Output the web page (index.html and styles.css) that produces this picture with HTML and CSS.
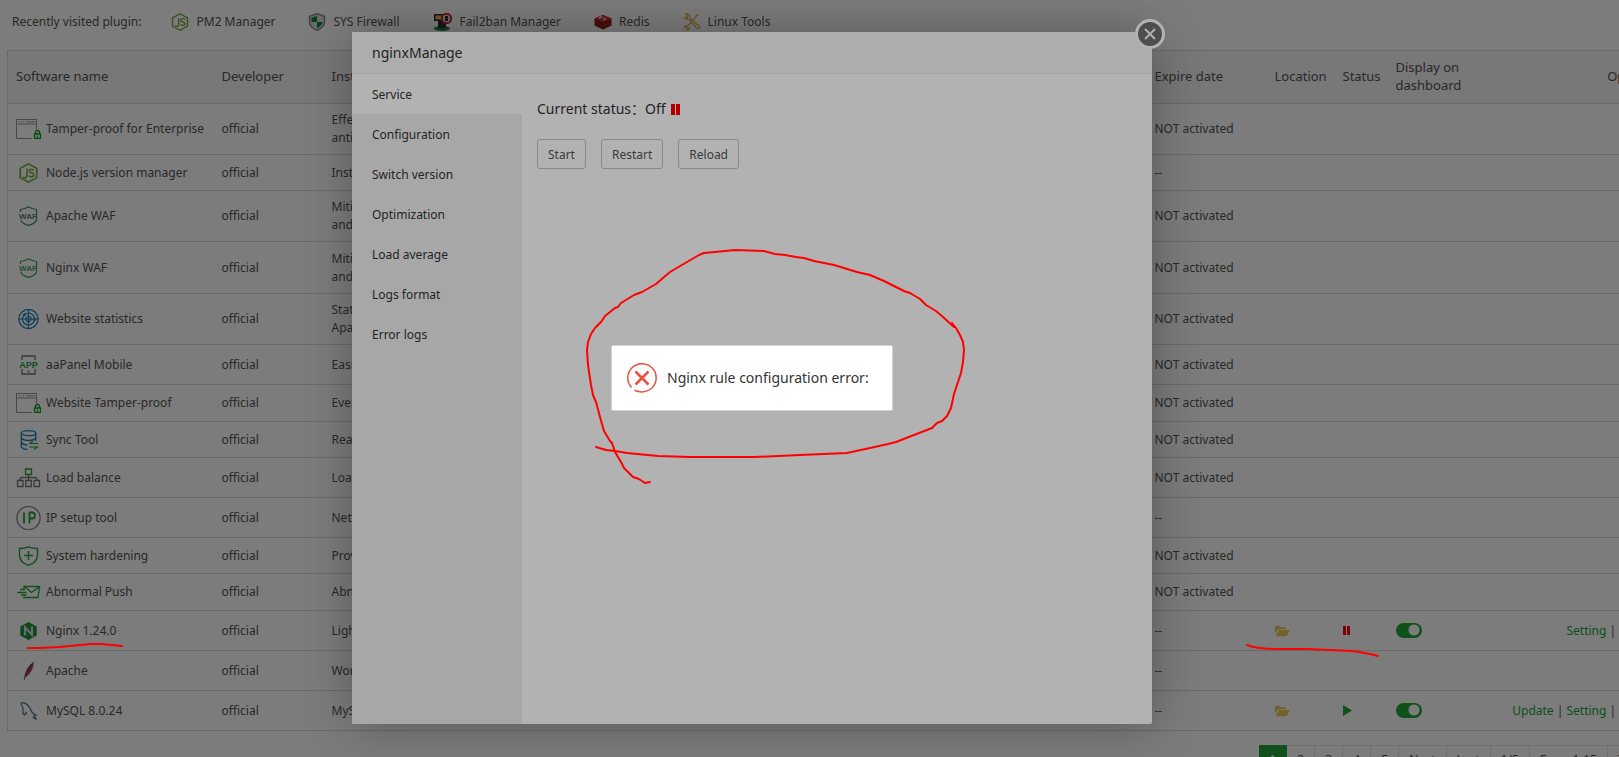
FILE: index.html
```
<!DOCTYPE html>
<html lang="en">
<head>
    <meta charset="UTF-8">
    <meta name="viewport" content="width=device-width, initial-scale=1.0">
    <title>aaPanel - App Store</title>
    <link rel="stylesheet" href="styles.css">
</head>
<body>
    <svg class="sprite" aria-hidden="true">
        <symbol id="i-node" viewBox="0 0 20 20">
            <g fill="none" stroke="#6da832" stroke-width="1.5">
                <path d="M10 .8l8.300 4.600v9.200L10 19.200l-8.300-4.600V5.400z"/>
                <path d="M8.500 5.500v7.500q0 1.700-1.700 1.700t-2-1M15.300 7.500q-.6-1.200-2.400-1.200t-2 1.600 2 1.900 2.400 2-2.200 1.900-2.500-1.200"/>
            </g>
        </symbol>
        <symbol id="i-tamper" viewBox="0 0 25 20">
            <path d="M15.500 19.500H.5V.5h20v10M.5 5h20M3 2.800h1M5 2.800h1M7 2.800h1M10 2.800h9" fill="none" stroke="#9696a0"/>
            <path d="M19.500 15v-1.500a2 2 0 0 1 4 0V15M18.500 15h6v4.500h-6zM21.500 16.500v2" fill="none" stroke="#0ca01c" stroke-width="1.300"/>
        </symbol>
        <symbol id="i-shield" viewBox="0 0 25 20">
            <path d="M4.500 6V3.500Q9 3 12.500.8 16 3 20.500 3.500V14q-1.500 3.800-8 5.300Q6.300 17.800 4.800 14" fill="none" stroke="currentColor" stroke-width="1.200"/>
        </symbol>
        <symbol id="i-folder" viewBox="0 0 16 12">
            <path d="M0 9V2q0-1.500 1.500-1.500h3Q6 .5 6 2h4.500Q12 2 12 3.500V4H4.500Q3 4 2.300 5.200zM.5 11.500l3-5.700Q4 5 5 5h10.500L13 10.500q-.5 1-1.500 1z" fill="#ecc95a"/>
        </symbol>
    </svg>

    <div class="page">
        <div class="recent">
            <span>Recently visited plugin:</span>
            <a href="#"><svg width="18" height="18"><use href="#i-node"/></svg>PM2 Manager</a>
            <a href="#"><svg width="18" height="18" viewBox="0 0 18 18"><path d="M9 .8l7.500 2.500v6Q16 14.500 9 17.300 2 14.500 1.500 9.300v-6z" fill="#ddd" stroke="#888" stroke-width="1.500"/><path d="M9 3v6H3.500V4.700zM9 9h5.500q-.5 4-5.500 6.300z" fill="#0b8a30"/></svg>SYS Firewall</a>
            <a href="#"><svg width="20" height="18" viewBox="0 0 20 18"><ellipse cx="9" cy="15.500" rx="8" ry="2.500" fill="#1d8438"/><path d="M1 1h9v7H1zM5 8h8v7H5z" fill="#333"/><path d="M2.500 2.500h6v4h-6z" fill="#d9c64e"/><circle cx="13.500" cy="5.500" r="4.700" fill="#ddd" stroke="#c8282d" stroke-width="2"/><path d="M12 3h3v5h-3z" fill="#333"/></svg>Fail2ban Manager</a>
            <a href="#"><svg width="18" height="16" viewBox="0 0 18 16"><path d="M9 1l8.500 3.500v7L9 15.500.5 11.500v-7z" fill="#8a1a1a"/><path d="M9 1l8.500 3.500L9 8.200.5 4.500z" fill="#cf3a36"/><path d="M.5 8L9 12l8.500-4" fill="none" stroke="#b52a28"/><path d="M5 4.200l3-1.500M9 5.500l3-1" stroke="#fff" stroke-width="1.300"/></svg>Redis</a>
            <a href="#"><svg width="18" height="18" viewBox="0 0 18 18"><path d="M5.500 6L14 15.200q1.500 1 2.300 0t0-2L7 5M5.500 6Q3 7 1.500 4.500L4 4.700 4.500 2 3 1q3.500-.5 4 4M16 1.500l-2.500 1-.8 2L5 12.500M5 12.500q-3-.5-3.500 2.500L4 14l1 1.500L4 17q3 0 3-3.500" fill="none" stroke="#d6b24c" stroke-width="1.300"/></svg>Linux Tools</a>
        </div>

        <table class="soft-table">
            <colgroup>
                <col class="c-name"><col class="c-dev"><col class="c-info"><col class="c-expire"><col class="c-loc"><col class="c-status"><col class="c-display"><col>
            </colgroup>
            <thead>
                <tr><th>Software name</th><th>Developer</th><th>Instructions</th><th>Expire date</th><th>Location</th><th>Status</th><th>Display on dashboard</th><th class="opt">Operation</th></tr>
            </thead>
            <tbody>
                <tr class="h51">
                    <td><div class="name"><svg width="25" height="20"><use href="#i-tamper"/></svg>Tamper-proof for Enterprise</div></td>
                    <td>official</td><td>Effective<br>anti-tamper</td><td>NOT activated</td><td></td><td></td><td></td><td></td>
                </tr>
                <tr class="h36">
                    <td><div class="name"><svg width="25" height="20"><use href="#i-node"/></svg>Node.js version manager</div></td>
                    <td>official</td><td>Install</td><td>--</td><td></td><td></td><td></td><td></td>
                </tr>
                <tr class="h51">
                    <td><div class="name"><svg class="waf waf-apache" width="25" height="20" viewBox="0 0 25 20"><use href="#i-shield"/><text x="12" y="13">WAF</text></svg>Apache WAF</div></td>
                    <td>official</td><td>Mitigate<br>and block</td><td>NOT activated</td><td></td><td></td><td></td><td></td>
                </tr>
                <tr class="h52">
                    <td><div class="name"><svg class="waf waf-nginx" width="25" height="20" viewBox="0 0 25 20"><use href="#i-shield"/><text x="12" y="13">WAF</text></svg>Nginx WAF</div></td>
                    <td>official</td><td>Mitigate<br>and block</td><td>NOT activated</td><td></td><td></td><td></td><td></td>
                </tr>
                <tr class="h51">
                    <td><div class="name"><svg width="25" height="20" viewBox="0 0 25 20"><g fill="none" stroke="#2080b8" stroke-width="1.200"><circle cx="12.500" cy="10" r="9.600"/><circle cx="12.500" cy="10" r="6"/><circle cx="12.500" cy="10" r="2.500"/><path d="M2 10h21M12.500 0v20"/></g><circle cx="8.500" cy="5.800" r="1.500" fill="#2080b8"/><circle cx="18.500" cy="10.500" r="1.500" fill="#2080b8"/></svg>Website statistics</div></td>
                    <td>official</td><td>Statistics<br>Apache</td><td>NOT activated</td><td></td><td></td><td></td><td></td>
                </tr>
                <tr class="h40">
                    <td><div class="name"><svg class="app" width="25" height="20" viewBox="0 0 25 20"><path d="M6 5V1h13v4M6 14v5h13v-5M11.500 16.500h2" fill="none" stroke="#777" stroke-width="1.300"/><text x="12.500" y="12.500">APP</text></svg>aaPanel Mobile</div></td>
                    <td>official</td><td>Easily</td><td>NOT activated</td><td></td><td></td><td></td><td></td>
                </tr>
                <tr class="h37">
                    <td><div class="name"><svg width="25" height="20"><use href="#i-tamper"/></svg>Website Tamper-proof</div></td>
                    <td>official</td><td>Event</td><td>NOT activated</td><td></td><td></td><td></td><td></td>
                </tr>
                <tr class="h36">
                    <td><div class="name"><svg width="25" height="20" viewBox="0 0 25 20"><g fill="none" stroke="#2080b8" stroke-width="1.300"><ellipse cx="12.500" cy="3.200" rx="7.200" ry="2.500"/><path d="M5.300 3.200v13.500q1 2.500 6 2.700M19.700 3.200V11M5.300 8q2 2.500 7.200 2.500T19.700 8M5.300 12.500q1.500 2 6 2.500"/></g><path d="M22 13.500h-8l3-2.500M13 17h8.500L18 19.500" fill="none" stroke="#20a53a" stroke-width="1.200"/></svg>Sync Tool</div></td>
                    <td>official</td><td>Real-time</td><td>NOT activated</td><td></td><td></td><td></td><td></td>
                </tr>
                <tr class="h40">
                    <td><div class="name"><svg width="25" height="20" viewBox="0 0 25 20"><path d="M12.500 7v5M4 12q0-2.500 2-2.500h13q2 0 2 2.500M1.500 12.500h5.500v6H1.500zM9.800 12.500h5.500v6H9.800zM18 12.500h5.500v6H18z" fill="none" stroke="#777" stroke-width="1.300"/><path d="M9.500 1h6v5.500h-6z" fill="none" stroke="#20a53a" stroke-width="1.300"/></svg>Load balance</div></td>
                    <td>official</td><td>Load</td><td>NOT activated</td><td></td><td></td><td></td><td></td>
                </tr>
                <tr class="h40">
                    <td><div class="name"><svg width="25" height="24" viewBox="0 0 25 24"><circle cx="12.500" cy="12" r="11.600" fill="none" stroke="#888" stroke-width="1.300"/><path d="M8 6.500v11M13.500 17.500v-11h2.500q3 0 3 3t-3 3h-2.500" fill="none" stroke="#20a53a" stroke-width="1.800"/></svg>IP setup tool</div></td>
                    <td>official</td><td>Network</td><td>--</td><td></td><td></td><td></td><td></td>
                </tr>
                <tr class="h36">
                    <td><div class="name"><svg width="25" height="20" viewBox="0 0 25 20"><path d="M12.500.8q4 1.700 9 1.700V9q0 7.500-9 10.300Q3.500 16.500 3.500 9V2.500q5 0 9-1.700zM8 9.500h9M12.500 5v9" fill="none" stroke="#20a53a" stroke-width="1.400"/></svg>System hardening</div></td>
                    <td>official</td><td>Provide</td><td>NOT activated</td><td></td><td></td><td></td><td></td>
                </tr>
                <tr class="h37">
                    <td><div class="name"><svg width="25" height="20" viewBox="0 0 25 20"><path d="M8 7V4.500h15.500L22 15.500H7M9 5l6.500 5.500L23 5M4 7.500h5M1 10.500h9.500M5 13h5.500" fill="none" stroke="#20a53a" stroke-width="1.300"/></svg>Abnormal Push</div></td>
                    <td>official</td><td>Abnormal</td><td>NOT activated</td><td></td><td></td><td></td><td></td>
                </tr>
                <tr class="h40">
                    <td><div class="name"><svg width="25" height="20" viewBox="0 0 25 20"><path d="M12.500 1l8.200 4.500v9L12.500 19l-8.200-4.500v-9z" fill="#1c963a"/><path d="M9 14.500V6.200l7 7.600V5.500" fill="none" stroke="#ddd" stroke-width="2.200"/></svg>Nginx 1.24.0</div></td>
                    <td>official</td><td>Lightweight</td><td>--</td>
                    <td><a class="folder" href="#" aria-label="Open folder"><svg width="15" height="12"><use href="#i-folder"/></svg></a></td>
                    <td><svg class="state" width="8" height="9" viewBox="0 0 8 9"><path d="M0 0h3v9H0zM4 0h3v9H4z" fill="#f00"/></svg></td>
                    <td><input class="switch" type="checkbox" aria-label="Display Nginx on dashboard" checked></td>
                    <td class="opt"><a href="#">Setting</a> | <a href="#">Uninstall</a></td>
                </tr>
                <tr class="h40">
                    <td><div class="name"><svg width="25" height="20" viewBox="0 0 25 20"><path d="M8 19q0-6 3-11t7-7.500q-.5 7-4 11.500t-5 4z" fill="#a8475f"/><path d="M8 19q2-9 8-16" fill="none" stroke="#59304a" stroke-width=".8"/></svg>Apache</div></td>
                    <td>official</td><td>World</td><td>--</td><td></td><td></td><td></td><td></td>
                </tr>
                <tr class="h40">
                    <td><div class="name"><svg width="25" height="20" viewBox="0 0 25 20"><path d="M5 2q3-1 6 1.500t4 6q1 3 5 4.500l-2 .5 2.500 4-4-2.500M5 2q0 2 1.500 4 1 2 .5 4.500T8.500 14l1.500-2.500L11 13" fill="none" stroke="#4c7388" stroke-width="1.200"/></svg>MySQL 8.0.24</div></td>
                    <td>official</td><td>MySQL</td><td>--</td>
                    <td><a class="folder" href="#" aria-label="Open folder"><svg width="15" height="12"><use href="#i-folder"/></svg></a></td>
                    <td><svg class="state" width="9" height="11" viewBox="0 0 9 11"><path d="M0 0l9 5.500L0 11z" fill="#20a53a"/></svg></td>
                    <td><input class="switch" type="checkbox" aria-label="Display MySQL on dashboard" checked></td>
                    <td class="opt"><a href="#">Update</a> | <a href="#">Setting</a> | <a href="#">Uninstall</a></td>
                </tr>
            </tbody>
        </table>

        <div class="pager">
            <span class="current">1</span><a href="#">2</a><a href="#">3</a><a href="#">4</a><a href="#">5</a><a href="#">Next</a><a href="#">Last</a><span>1/5</span><span>From 1-15</span><span>Total 73</span>
        </div>
    </div>

    <div class="shade"></div>

    <div class="layer" role="dialog" aria-labelledby="layer-title">
        <div class="layer-title" id="layer-title">nginxManage</div>
        <div class="layer-body">
            <nav class="menu">
                <a class="active" href="#">Service</a>
                <a href="#">Configuration</a>
                <a href="#">Switch version</a>
                <a href="#">Optimization</a>
                <a href="#">Load average</a>
                <a href="#">Logs format</a>
                <a href="#">Error logs</a>
            </nav>
            <div class="service">
                <p class="status">Current status：<span>Off</span><svg width="9" height="11" viewBox="0 0 9 11"><path d="M0 0h4v11H0zM5 0h4v11H5z" fill="#f00"/></svg></p>
                <div class="buttons">
                    <button type="button">Start</button>
                    <button type="button">Restart</button>
                    <button type="button">Reload</button>
                </div>
            </div>
        </div>
        <button class="layer-close" type="button" aria-label="Close"><svg width="12" height="12" viewBox="0 0 12 12"><path d="M1 1l10 10M11 1L1 11" stroke="#fff" stroke-width="1.800"/></svg></button>
    </div>

    <div class="shade"></div>

    <div class="msg" role="alert">
        <svg width="30" height="30" viewBox="0 0 30 30"><path d="M4.500 24.500A14.200 14.200 0 1 1 25 25Q17 31.500 7.500 27.300" fill="none" stroke="#e8503f" stroke-width="1.500"/><path d="M8.500 8.500l13 13M21.500 8.500l-13 13" stroke="#e8503f" stroke-width="2.600"/></svg>
        <span>Nginx rule configuration error:</span>
    </div>

    <!-- red pen marks -->
    <svg class="marks" width="1619" height="757" aria-hidden="true">
        <path d="M596 447L606 450 615 451 627 453 658 456 690 457 755 457 800 455 847 453 870 448 888 444 896 442 914 435 932 428 937 423 942 421 947 416 951 408 954 394 961 373 963 362 964 350 963 342 960 335 956 328 952 323 954 327 943 317 936 311 926 305 920 299 910 293 904 291 884 281 870 275 857 272 834 265 814 261 804 258 796 257 785 255 775 254 764 251 735 250 715 252 704 253 699 255 687 262 670 272 656 284 642 292 634 295 621 303 618 307 615 308 605 316 601 322 595 328 591 334 588 342 587 350 588 365 591 385 593 395 596 402 600 417 604 431 610 441 612 443 615 452 621 462 624 468 633 477 639 479 645 483 650 482"/>
        <path d="M28 648h12l20-1 30-3h12l20 2"/>
        <path d="M1247 645q10 4 30 4h30l45 2q15 2 26 5"/>
    </svg>
</body>
</html>
```
FILE: styles.css
```
* {
    box-sizing: border-box;
}

body {
    margin: 0;
    height: 100vh;
    overflow: hidden;
    position: relative;
    background-color: #fff;
    color: #555;
    font-family: "Noto Sans", "Noto Sans CJK SC", sans-serif;
    font-size: 12px;
    line-height: 18px;
}

a {
    color: inherit;
    text-decoration: none;
}

button {
    font-family: inherit;
    cursor: pointer;
}

.sprite {
    display: none;
}

.page {
    width: 1685px;
    padding: 0 7px;
}

/* recently visited */
.recent {
    display: flex;
    align-items: center;
    gap: 33px;
    height: 50px;
    padding: 0 5px 7px;
}

.recent span {
    margin-right: -3px;
}

.recent a {
    display: flex;
    align-items: center;
    gap: 7px;
}

/* software list */
.soft-table {
    width: 100%;
    table-layout: fixed;
    border-collapse: collapse;
    border: 1px solid #d8d8d8;
}

.c-name { width: 206px; }
.c-dev { width: 110px; }
.c-info { width: 823px; }
.c-expire { width: 120px; }
.c-loc { width: 68px; }
.c-status { width: 53px; }
.c-display { width: 100px; }

.soft-table th,
.soft-table td {
    padding: 0 8px;
    border-bottom: 1px solid #d8d8d8;
    text-align: left;
    vertical-align: middle;
}

.soft-table th {
    height: 53px;
    padding-bottom: 2px;
    background-color: #f6f6f6;
    font-size: 13px;
    font-weight: normal;
}

.soft-table .opt {
    text-align: right;
}

td.opt a {
    color: #20a53a;
}

.h36 { height: 36px; }
.h37 { height: 37px; }
.h40 { height: 40px; }
.h51 { height: 51px; }
.h52 { height: 52px; }

.name {
    display: flex;
    align-items: center;
    gap: 5px;
    white-space: nowrap;
}

.waf,
.app {
    fill: currentColor;
    font-family: "Liberation Sans", sans-serif;
    font-size: 8px;
    font-weight: bold;
    text-anchor: middle;
}

.waf-apache {
    color: #4b8c64;
}

.waf-nginx {
    color: #3ba55c;
}

.app {
    color: #20a53a;
    font-size: 9px;
}

.folder svg,
.state {
    display: block;
}

.switch {
    appearance: none;
    display: block;
    width: 26px;
    height: 15px;
    margin: 0;
    border-radius: 8px;
    background: radial-gradient(circle at 18px 7px, #fff 5px, #20a53a 6px);
}

/* pagination */
.pager {
    display: flex;
    justify-content: flex-end;
    margin-top: 14px;
    padding-right: 5px;
}

.pager a,
.pager span {
    min-width: 28px;
    padding: 5px 10px;
    border: 1px solid #e6e6e6;
    border-left: 0;
}

.pager .current {
    border-color: #20a53a;
    background-color: #20a53a;
    color: #fff;
}

/* layers */
.shade {
    position: absolute;
    inset: 0;
    background-color: rgba(0, 0, 0, 0.3);
}

.layer {
    position: absolute;
    top: 32px;
    left: 352px;
    width: 800px;
    height: 692px;
    display: flex;
    flex-direction: column;
    border-radius: 2px;
    background-color: #fff;
    box-shadow: 1px 1px 50px rgba(0, 0, 0, 0.3);
    color: #333;
}

.layer-title {
    height: 42px;
    padding: 0 20px;
    border-bottom: 1px solid #eee;
    background-color: #f8f8f8;
    font-size: 14px;
    line-height: 42px;
}

.layer-body {
    flex: 1;
    display: flex;
}

.menu {
    width: 170px;
    background-color: #f0f0f0;
}

.menu a {
    display: block;
    height: 40px;
    padding-left: 20px;
    line-height: 42px;
}

.menu .active {
    background-color: #fff;
}

.service {
    flex: 1;
    padding: 25px 15px;
}

.status {
    display: flex;
    align-items: center;
    margin: 0 0 20px;
    font-size: 14px;
    line-height: 20px;
}

.status svg {
    margin-left: 5px;
}

.buttons {
    display: flex;
    gap: 15px;
}

.buttons button {
    height: 30px;
    padding: 0 10px;
    border: 1px solid #c4c4c4;
    border-radius: 3px;
    background-color: #fff;
    color: #555;
    font-size: 12px;
}

.layer-close {
    position: absolute;
    top: -13px;
    right: -13px;
    width: 30px;
    height: 30px;
    display: flex;
    align-items: center;
    justify-content: center;
    padding: 0;
    border: 3px solid #fff;
    border-radius: 50%;
    background-color: #707070;
}

.msg {
    position: absolute;
    top: 345px;
    left: 611px;
    display: flex;
    align-items: center;
    gap: 10px;
    min-width: 282px;
    height: 66px;
    padding: 0 20px 0 15px;
    border: 1px solid #d3d3d3;
    border-radius: 2px;
    background-color: #fff;
    color: #333;
    font-size: 14px;
    white-space: nowrap;
}

.marks {
    position: absolute;
    top: 0;
    left: 0;
    fill: none;
    stroke: #f00;
    stroke-width: 2;
    stroke-linejoin: round;
    stroke-linecap: round;
    pointer-events: none;
}
```
